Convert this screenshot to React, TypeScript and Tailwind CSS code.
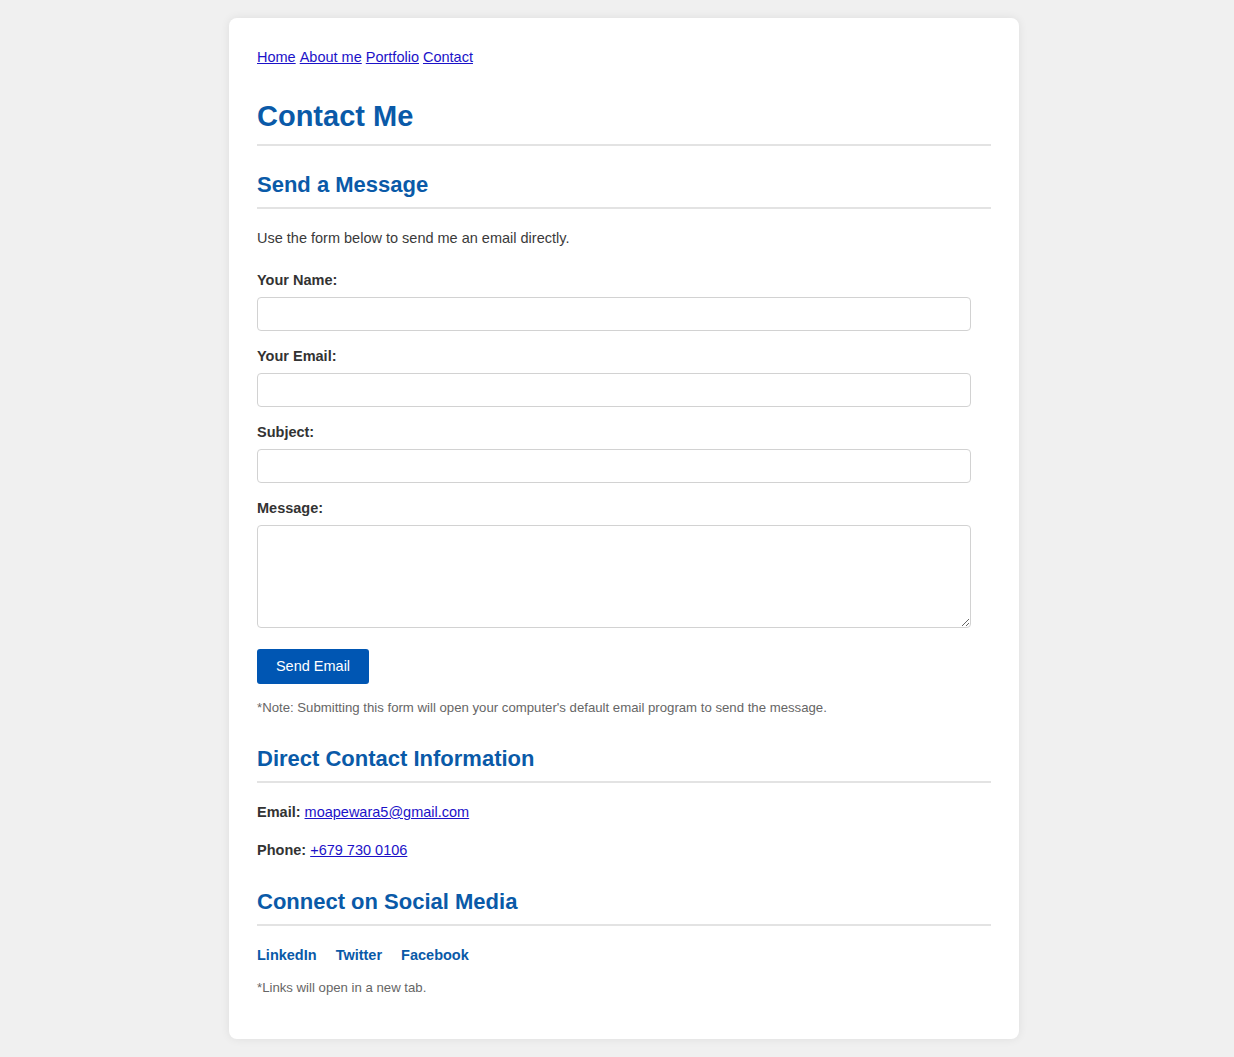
import React from "react";

export default function App() {
  const label = "block text-[14.5px] leading-[17px] font-bold text-[#333]";
  const input =
    "block w-[714px] h-[34px] mt-[8px] border border-[#d2d2d2] rounded-[4px] bg-white px-2 outline-none";
  const h2 =
    "text-[22px] leading-[26px] font-bold text-[#0a5aa8] pb-[9px] border-b-2 border-[#e3e3e3]";
  return (
    <div className="min-h-screen bg-[#f0f0f0] pt-[18px] pb-[18px] font-['Liberation_Sans',Arial,sans-serif] text-[#333]">
      <div className="ml-[229px] w-[790px] bg-white rounded-[8px] shadow-[0_0_10px_rgba(0,0,0,0.08)] pt-[31px] px-[28px] pb-[44px]">
        <nav className="text-[14.5px] leading-[17px] flex gap-[4px]">
          <a href="#" className="text-[#1c12c8] underline">Home</a>
          <a href="#" className="text-[#1c12c8] underline">About me</a>
          <a href="#" className="text-[#1c12c8] underline">Portfolio</a>
          <a href="#" className="text-[#1c12c8] underline">Contact</a>
        </nav>

        <h1 className="mt-[33px] text-[29px] leading-[34px] font-bold text-[#0a5aa8] pb-[11px] border-b-2 border-[#e3e3e3]">
          Contact Me
        </h1>

        <h2 className={"mt-[26px] " + h2}>Send a Message</h2>
        <p className="mt-[21px] text-[14.5px] leading-[17px] text-[#3a3a3a]">
          Use the form below to send me an email directly.
        </p>

        <form onSubmit={(e) => e.preventDefault()}>
          <label className={"mt-[25px] " + label}>Your Name:</label>
          <input type="text" className={input} />
          <label className={"mt-[17px] " + label}>Your Email:</label>
          <input type="email" className={input} />
          <label className={"mt-[17px] " + label}>Subject:</label>
          <input type="text" className={input} />
          <label className={"mt-[17px] " + label}>Message:</label>
          <textarea className="block w-[714px] h-[103px] mt-[8px] border border-[#d2d2d2] rounded-[4px] bg-white px-2 outline-none" />
          <button
            type="submit"
            className="block mt-[21px] w-[112px] h-[35px] bg-[#0056b3] text-white text-[14.5px] rounded-[3px]"
          >
            Send Email
          </button>
        </form>
        <p className="mt-[16px] text-[13.2px] leading-[15px] text-[#666]">
          *Note: Submitting this form will open your computer's default email program to send the message.
        </p>

        <h2 className={"mt-[31px] " + h2}>Direct Contact Information</h2>
        <p className="mt-[21px] text-[14.5px] leading-[17px]">
          <span className="font-bold">Email:</span>{" "}
          <a href="#" className="text-[#1c12c8] underline">moapewara5@gmail.com</a>
        </p>
        <p className="mt-[21px] text-[14.5px] leading-[17px]">
          <span className="font-bold">Phone:</span>{" "}
          <a href="#" className="text-[#1c12c8] underline">+679 730 0106</a>
        </p>

        <h2 className={"mt-[30px] " + h2}>Connect on Social Media</h2>
        <div className="mt-[21px] flex gap-[19px] text-[14.5px] leading-[17px] font-bold text-[#0a5aa8]">
          <a href="#">LinkedIn</a>
          <a href="#">Twitter</a>
          <a href="#">Facebook</a>
        </div>
        <p className="mt-[16px] text-[13.2px] leading-[15px] text-[#666]">*Links will open in a new tab.</p>
      </div>
    </div>
  );
}
